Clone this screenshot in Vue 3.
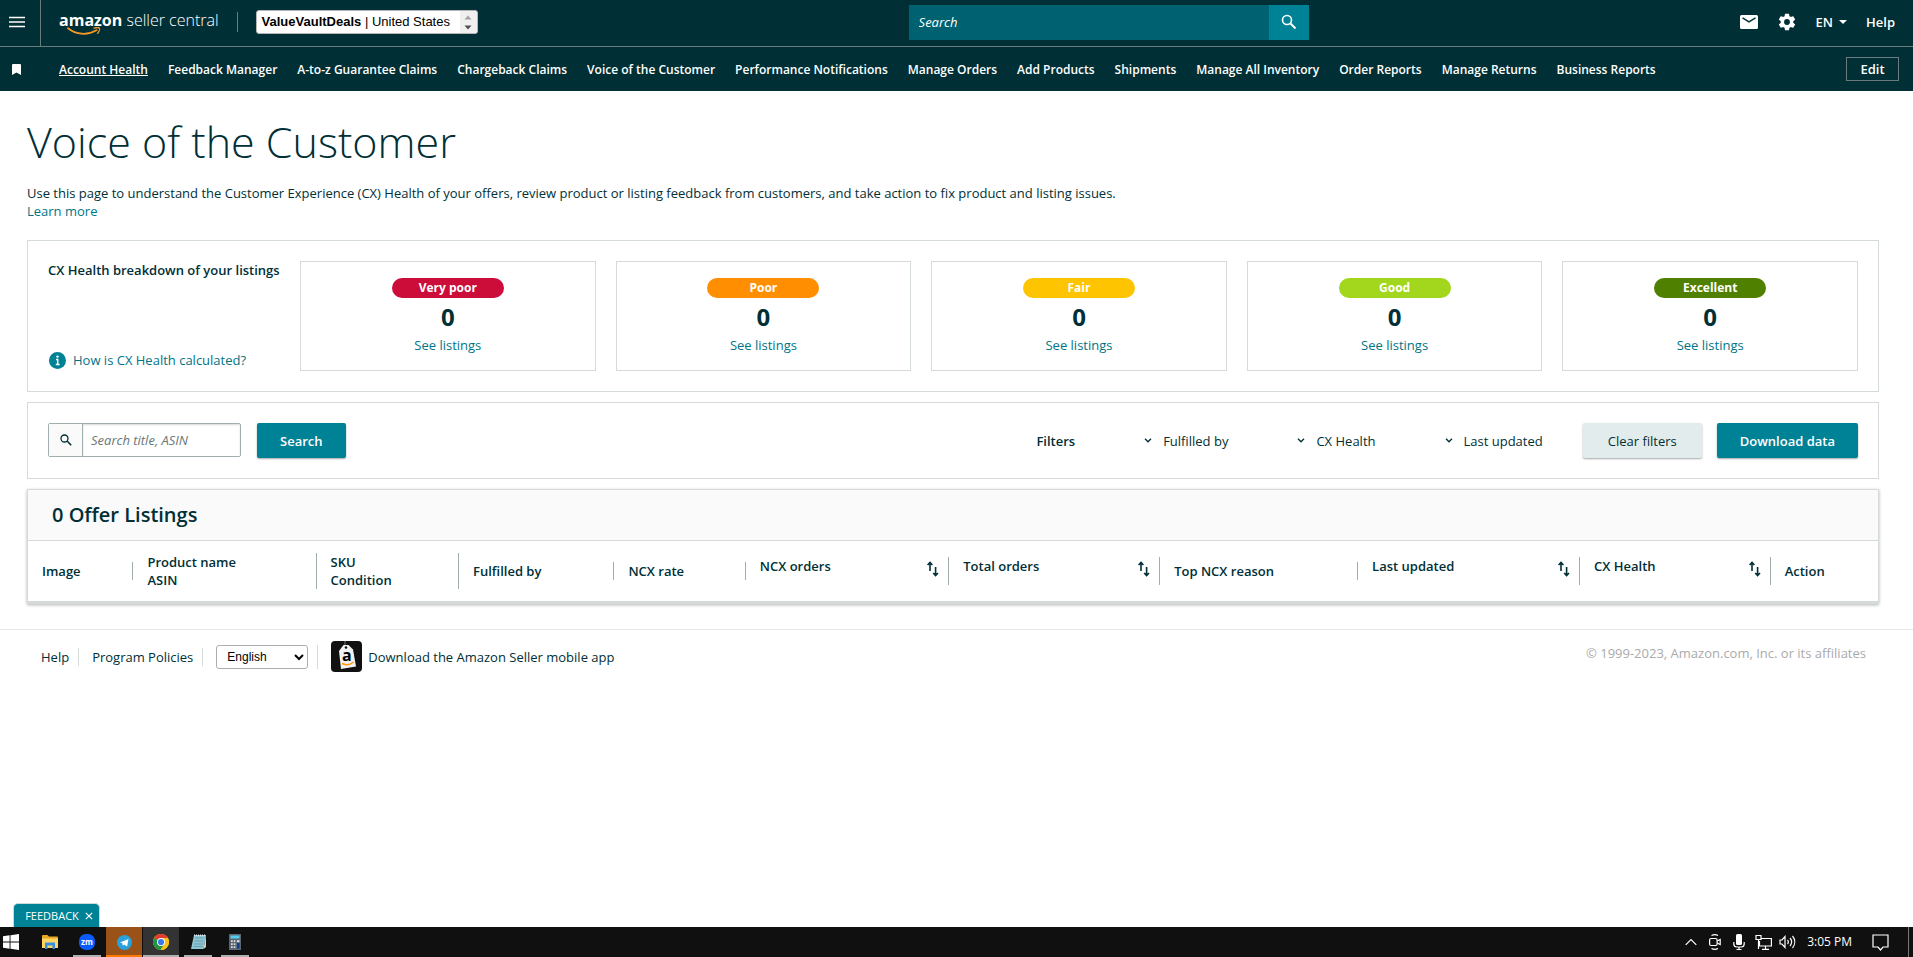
<template>
  <div class="page">
    <header class="topbar">
      <button class="menu-btn" aria-label="Menu">
        <svg width="16" height="12" viewBox="0 0 16 12"><path d="M0 1.500h16M0 6h16M0 10.500h16" stroke="#fff" stroke-width="1.600" /></svg>
      </button>
      <a class="logo" href="#">
        <b>amazon</b> seller central
        <svg class="smile" width="34" height="9" viewBox="0 0 34 9">
          <path d="M1 1.200C9 7.600 20 8.800 29.500 3.200" fill="none" stroke="#f59a23" stroke-width="1.800" stroke-linecap="round" />
          <path d="M27 1.200c2.500-.8 4.500-.8 5.300-.2.600.900-.1 3.600-1.600 5.400" fill="none" stroke="#f59a23" stroke-width="1.300" stroke-linecap="round" />
        </svg>
      </a>
      <span class="topbar-divider"></span>
      <button class="account">
        <span class="account-name"><b>ValueVaultDeals</b> | United States</span>
        <span class="account-arrows">
          <svg width="8" height="18" viewBox="0 0 8 18"><path d="M.5 6.500 4 2.500l3.500 4z" fill="#a3a3a3" /><path d="M.5 12.500 4 16.500l3.500-4z" fill="#505050" /></svg>
        </span>
      </button>
      <form class="top-search" @submit.prevent>
        <input v-model="topQuery" type="text" placeholder="Search" aria-label="Search" />
        <button aria-label="Go">
          <svg width="16" height="16" viewBox="0 0 16 16" fill="none" stroke="#fff"><circle cx="6" cy="6" r="4.500" stroke-width="1.600" /><path d="m9.500 9.500 5 5" stroke-width="2" /></svg>
        </button>
      </form>
      <div class="top-tools">
        <button aria-label="Messages">
          <svg width="18" height="14" viewBox="0 0 18 14"><rect width="18" height="14" rx="1.500" fill="#fff" /><path d="m2.500 2.800 6.500 4 6.500-4" fill="none" stroke="#002f36" stroke-width="1.500" /></svg>
        </button>
        <button aria-label="Settings">
          <svg width="20" height="20" viewBox="0 0 24 24" fill="#fff"><path d="M19.430 12.980c.04-.32.070-.64.070-.98s-.03-.66-.07-.98l2.110-1.650c.19-.15.240-.42.120-.64l-2-3.460c-.12-.22-.39-.3-.61-.22l-2.490 1c-.52-.4-1.080-.73-1.690-.98l-.38-2.650C14.460 2.180 14.250 2 14 2h-4c-.25 0-.46.180-.49.420l-.38 2.650c-.61.250-1.170.590-1.690.980l-2.490-1c-.23-.09-.49 0-.61.220l-2 3.460c-.13.220-.07.490.120.640l2.110 1.650c-.04.320-.07.650-.07.980s.03.660.070.980l-2.110 1.650c-.19.150-.24.420-.12.640l2 3.460c.12.220.390.300.610.220l2.490-1c.52.400 1.080.730 1.690.980l.38 2.650c.03.240.240.420.490.420h4c.25 0 .46-.18.490-.42l.38-2.650c.61-.25 1.170-.59 1.690-.98l2.490 1c.23.090.490 0 .610-.22l2-3.460c.12-.22.070-.49-.12-.64zM12 15.500A3.500 3.500 0 1 1 12 8.500a3.500 3.500 0 0 1 0 7z" /></svg>
        </button>
        <button class="lang">EN <svg width="8" height="4" viewBox="0 0 8 4"><path d="M0 0h8L4 4z" fill="#fff" /></svg></button>
        <a href="#">Help</a>
      </div>
    </header>

    <nav class="favorites">
      <span class="bookmark">
        <svg width="9" height="11" viewBox="0 0 9 11"><path d="M0 1a1 1 0 0 1 1-1h7a1 1 0 0 1 1 1v10L4.500 8.500 0 11z" fill="#fff" /></svg>
      </span>
      <div class="favorites-links">
        <a v-for="(item, i) in favorites" :key="item" href="#" :class="{ current: i === 0 }">{{ item }}</a>
      </div>
      <button class="edit-btn">Edit</button>
    </nav>

    <main class="content">
      <h1>Voice of the Customer</h1>
      <p class="intro">
        Use this page to understand the Customer Experience (CX) Health of your offers, review product or listing feedback from customers, and take action to fix product and listing issues.<br />
        <a href="#">Learn more</a>
      </p>

      <section class="panel breakdown">
        <div class="breakdown-side">
          <h2>CX Health breakdown of your listings</h2>
          <a class="how" href="#">
            <svg width="17" height="17" viewBox="0 0 17 17"><circle cx="8.500" cy="8.500" r="8.500" fill="#008296" /><path d="M7 7.500h1.700v4.700M6.800 12.500h3.800" stroke="#fff" stroke-width="1.500" fill="none" /><circle cx="8.500" cy="4.600" r="1.200" fill="#fff" /></svg>
            How is CX Health calculated?
          </a>
        </div>
        <div class="cards">
          <div v-for="card in cards" :key="card.label" class="card">
            <span class="pill" :class="card.tone">{{ card.label }}</span>
            <strong>{{ card.count }}</strong>
            <a href="#">See listings</a>
          </div>
        </div>
      </section>

      <section class="panel toolbar">
        <form class="search-form" @submit.prevent>
          <div class="search-box">
            <label for="listing-search" aria-label="Search title, ASIN">
              <svg width="12" height="12" viewBox="0 0 12 12" fill="none" stroke="#002f36"><circle cx="4.500" cy="4.500" r="3.500" stroke-width="1.300" /><path d="m7 7 4.200 4.200" stroke-width="1.600" /></svg>
            </label>
            <input id="listing-search" v-model="listingQuery" type="text" placeholder="Search title, ASIN" />
          </div>
          <button class="btn primary">Search</button>
        </form>
        <div class="filters">
          <span class="filters-title">Filters</span>
          <button v-for="filter in filters" :key="filter" class="filter">
            <svg width="8" height="5" viewBox="0 0 8 5"><path d="m1 .8 3 3 3-3" fill="none" stroke="#002f36" stroke-width="1.300" /></svg>
            {{ filter }}
          </button>
        </div>
        <button class="btn secondary">Clear filters</button>
        <button class="btn primary download">Download data</button>
      </section>

      <section class="listings">
        <h2>0 Offer Listings</h2>
        <table>
          <colgroup>
            <col v-for="col in columns" :key="col.lines[0]" :style="{ width: col.width + '%' }" />
          </colgroup>
          <thead>
            <tr>
              <th v-for="col in columns" :key="col.lines[0]">
                <div class="th-inner" :class="{ sortable: col.sortable }">
                  <span><template v-for="(line, i) in col.lines" :key="line"><br v-if="i" />{{ line }}</template></span>
                  <button v-if="col.sortable" :aria-label="'Sort by ' + col.lines[0]">
                    <svg width="12" height="16" viewBox="0 0 12 16" fill="none" stroke="#002f36" stroke-width="1.600"><path d="M3 10V1.500M.6 4 3 1.400 5.400 4M8.600 6v8.500M6.200 12l2.400 2.600L11 12" /></svg>
                  </button>
                </div>
              </th>
            </tr>
          </thead>
        </table>
      </section>
    </main>

    <footer class="footer">
      <a href="#">Help</a>
      <a href="#">Program Policies</a>
      <div class="footer-lang">
        <select v-model="language" aria-label="Language">
          <option>English</option>
        </select>
      </div>
      <a class="app-link" href="#">
        <svg width="31" height="31" viewBox="0 0 31 31">
          <rect width="31" height="31" rx="4" fill="#111" />
          <path d="M14 0v5" stroke="#777" />
          <path d="m8 10 4.500-6h5L22 8.500l3 17L10 28z" fill="#f2f2f2" />
          <circle cx="15" cy="6.500" r="1.300" fill="#111" />
          <text x="11" y="20" class="app-letter">a</text>
          <path d="M11 22.500c4 2 8 1.500 11.500-1.500" fill="none" stroke="#f90" stroke-width="1.400" />
        </svg>
        Download the Amazon Seller mobile app
      </a>
      <span class="copyright">© 1999-2023, Amazon.com, Inc. or its affiliates</span>
    </footer>

    <button class="feedback">
      FEEDBACK
      <svg width="8" height="8" viewBox="0 0 8 8"><path d="m.8.8 6.400 6.400M7.200.8.8 7.200" stroke="#fff" stroke-width="1.200" /></svg>
    </button>

    <div class="taskbar">
      <button class="task start" aria-label="Start">
        <svg width="16" height="16" viewBox="0 0 16 16" fill="#fff"><path d="M0 2.200 6.600 1.300v6.200H0zM7.500 1.200 16 0v7.500H7.500zM0 8.400h6.600v6.300L0 13.800zM7.500 8.400H16V16l-8.500-1.200z" /></svg>
      </button>
      <button class="task" aria-label="File Explorer">
        <svg width="16" height="14" viewBox="0 0 16 14"><path d="M0 1a1 1 0 0 1 1-1h4.500L7 1.500h8a1 1 0 0 1 1 1V13H0z" fill="#e8a722" /><path d="M0 3.500h16V13H0z" fill="#fdd663" /><path d="M3 14V7.500h10V14h-2.500v-3.500h-5V14z" fill="#3a8ee0" /></svg>
      </button>
      <button class="task open" aria-label="Zoom">
        <svg width="16" height="16" viewBox="0 0 16 16"><rect width="16" height="16" rx="7" fill="#0b5cff" /><text x="8" y="10.500" text-anchor="middle" class="zm">zm</text></svg>
      </button>
      <button class="task alert" aria-label="Telegram">
        <svg width="15" height="15" viewBox="0 0 15 15"><circle cx="7.500" cy="7.500" r="7.500" fill="#2aa1da" /><path d="m3 7.400 8.500-3.500-1.400 7.600-3-2-1.300 1.300-.4-2.500z" fill="#fff" /></svg>
      </button>
      <button class="task active" aria-label="Chrome">
        <svg width="16" height="16" viewBox="0 0 16 16"><circle cx="8" cy="8" r="8" fill="#fbc116" /><path d="M8 8 1.100 4A8 8 0 0 1 14.900 4z" fill="#e33b2e" /><path d="M8 8 1.100 4A8 8 0 0 0 7.500 16l4-6z" fill="#229342" /><path d="M8 4h6.900A8 8 0 0 1 7.500 16l4-6z" fill="#fbc116" /><circle cx="8" cy="8" r="4" fill="#fff" /><circle cx="8" cy="8" r="3.100" fill="#3b78e7" /></svg>
      </button>
      <button class="task open" aria-label="Notepad">
        <svg width="15" height="16" viewBox="0 0 15 16"><path d="M3 1h12l-2.500 14H0z" fill="#8fc6d3" /><path d="M12.500 15 15 1v12z" fill="#d8d8c8" /><path d="M4 4h9M3.500 7h9M3 10h9M2.500 12.500h9" stroke="#5d96a5" stroke-width=".8" /><path d="M3 1.200h12" stroke="#d9e8ec" stroke-width="1.600" stroke-dasharray="1 1" /></svg>
      </button>
      <button class="task open" aria-label="Calculator">
        <svg width="12" height="16" viewBox="0 0 12 16"><rect width="12" height="16" fill="#5c6670" /><rect x="1.500" y="1.500" width="9" height="3" fill="#55cbee" /><path d="M2 7.200h5.500M2 10.200h5.500M2 13.200h5.500" stroke="#d7dde2" stroke-width="1.800" stroke-dasharray="1.700 1" /><rect x="8" y="9" width="2.500" height="5.500" fill="#123f86" /><rect x="8" y="6.200" width="2.500" height="2" fill="#d7dde2" /></svg>
      </button>
      <div class="tray">
        <span class="tray-icon"><svg width="12" height="8" viewBox="0 0 12 8"><path d="m.7 6.800 5.300-5.300 5.300 5.300" /></svg></span>
        <span class="tray-icon"><svg width="12" height="16" viewBox="0 0 12 16"><rect x=".6" y="4.500" width="7.500" height="7" rx="1.500" /><path d="m8.200 7 3-1.500v5L8.200 9M2.500 1.500C4.500.4 7 .4 9 1.500M2.500 14.500c2 1.100 4.500 1.100 6.500 0" /></svg></span>
        <span class="tray-icon"><svg width="12" height="16" viewBox="0 0 12 16"><rect x="3" y="0" width="6" height="11" rx="1.500" fill="#fff" stroke="none" /><path d="M.8 8v2c0 2 1.500 3 3 3h4.400c1.500 0 3-1 3-3V8M6 13v2.500M3.500 15.500h5" /></svg></span>
        <span class="tray-icon"><svg width="17" height="16" viewBox="0 0 17 16"><path d="M6 4.500h10.400v7.500H4.500V7M10.500 12v3M7 15.400h7M1 1.500h5v4H1zM3.500 5.500V15" /></svg></span>
        <span class="tray-icon"><svg width="17" height="14" viewBox="0 0 17 14"><path d="M1 5h2l3-3.500v11L3 9H1zM8.500 5c1 1.200 1 2.800 0 4M11 3c2 2.400 2 5.600 0 8M13.500 1c3 3.600 3 8.400 0 12" /></svg></span>
        <span class="clock">3:05 PM</span>
        <span class="tray-icon"><svg width="17" height="17" viewBox="0 0 17 17"><path d="M1 1h15v12h-5l-2.500 3L6 13H1z" /></svg></span>
      </div>
    </div>
  </div>
</template>

<script setup>
import { ref } from 'vue'

const topQuery = ref('')
const listingQuery = ref('')
const language = ref('English')

const favorites = [
  'Account Health', 'Feedback Manager', 'A-to-z Guarantee Claims', 'Chargeback Claims',
  'Voice of the Customer', 'Performance Notifications', 'Manage Orders', 'Add Products',
  'Shipments', 'Manage All Inventory', 'Order Reports', 'Manage Returns', 'Business Reports'
]

const cards = [
  { label: 'Very poor', tone: 'very-poor', count: 0 },
  { label: 'Poor', tone: 'poor', count: 0 },
  { label: 'Fair', tone: 'fair', count: 0 },
  { label: 'Good', tone: 'good', count: 0 },
  { label: 'Excellent', tone: 'excellent', count: 0 }
]

const filters = ['Fulfilled by', 'CX Health', 'Last updated']

// widths are shares of the table
const columns = [
  { lines: ['Image'], width: 5.7 },
  { lines: ['Product name', 'ASIN'], width: 9.9 },
  { lines: ['SKU', 'Condition'], width: 7.7 },
  { lines: ['Fulfilled by'], width: 8.4 },
  { lines: ['NCX rate'], width: 7.1 },
  { lines: ['NCX orders'], width: 11, sortable: true },
  { lines: ['Total orders'], width: 11.4, sortable: true },
  { lines: ['Top NCX reason'], width: 10.7 },
  { lines: ['Last updated'], width: 12, sortable: true },
  { lines: ['CX Health'], width: 10.3, sortable: true },
  { lines: ['Action'], width: 5.8 }
]
</script>

<style>
body {
  margin: 0;
  background: #fff;
}
</style>

<style scoped>
.page {
  min-height: 100vh;
  color: #002f36;
  font-family: "Open Sans", "Noto Sans", sans-serif;
  font-size: 13px;
  line-height: 18px;
}

.page * {
  box-sizing: border-box;
}

a {
  color: #007587;
  text-decoration: none;
}

button,
input {
  font: inherit;
  color: inherit;
}

button {
  padding: 0;
  border: none;
  background: none;
  cursor: pointer;
}

svg {
  display: block;
  flex-shrink: 0;
}

/* top bar */
.topbar {
  display: flex;
  align-items: center;
  height: 47px;
  padding-bottom: 2px;
  background: #002f36;
  border-bottom: 1px solid #6b7b7d;
  color: #fff;
}

.menu-btn {
  display: flex;
  align-items: center;
  width: 41px;
  height: 46px;
  margin-bottom: -2px;
  padding: 0 0 2px 9px;
  border-right: 1px solid #6b7b7d;
}

.logo {
  position: relative;
  margin-left: 18px;
  padding-bottom: 4px;
  font-size: 16px;
  font-weight: 300;
  color: #fff;
  white-space: nowrap;
}

.logo b {
  font-weight: 700;
}

.smile {
  position: absolute;
  left: 8px;
  top: 16px;
}

.topbar-divider {
  width: 1px;
  height: 20px;
  margin: 0 18px;
  background: #6b7b7d;
}

.account {
  display: flex;
  align-items: center;
  justify-content: space-between;
  width: 222px;
  height: 24px;
  border: 1px solid #b5b5b5;
  border-radius: 3px;
  background: #fff;
  color: #000;
  font-family: "Liberation Sans", Arial, sans-serif;
  overflow: hidden;
}

.account-name {
  padding-left: 5px;
}

.account-arrows {
  display: flex;
  align-items: center;
  justify-content: center;
  width: 17px;
  height: 100%;
  background: #f0f0f0;
}

.top-search {
  display: flex;
  width: 400px;
  height: 35px;
  margin-left: auto;
}

.top-search input {
  flex: 1;
  min-width: 0;
  padding: 0 10px;
  border: none;
  background: #006170;
}

.top-search input::placeholder {
  color: #fff;
  font-style: italic;
  opacity: 1;
}

.top-search button {
  display: flex;
  align-items: center;
  justify-content: center;
  width: 40px;
  background: #008296;
}

.top-tools {
  display: flex;
  align-items: center;
  gap: 19px;
  margin-left: auto;
  padding-right: 18px;
  font-weight: 600;
}

.top-tools a {
  color: #fff;
}

.lang {
  display: flex;
  align-items: center;
  gap: 6px;
}

/* favorites bar */
.favorites {
  display: flex;
  align-items: center;
  height: 44px;
  padding-right: 14px;
  background: #002f36;
  color: #fff;
  font-weight: 600;
  white-space: nowrap;
}

.favorites-links {
  display: flex;
  gap: 20px;
  padding-top: 2px;
  font-size: 12px;
}

.favorites a {
  color: #fff;
}

.favorites .current {
  text-decoration: underline;
}

.bookmark {
  width: 59px;
  padding-left: 12px;
}

.edit-btn {
  width: 53px;
  height: 24px;
  margin-left: auto;
  border: 1px solid #6b7b7d;
}

/* content */
.content {
  padding: 23px 34px 25px 27px;
}

h1 {
  margin: 0;
  font-size: 43px;
  font-weight: 300;
  line-height: 56px;
}

h2 {
  margin: 0;
  font-size: 13px;
  font-weight: 600;
  line-height: 18px;
}

.intro {
  margin: 14px 0 20px;
}

.panel {
  margin-bottom: 10px;
  border: 1px solid #d5dbdb;
}

.breakdown {
  display: flex;
  padding: 20px;
}

.breakdown-side {
  display: flex;
  flex-direction: column;
  justify-content: space-between;
  flex-shrink: 0;
  width: 252px;
  padding-bottom: 2px;
}

.how {
  display: flex;
  align-items: center;
  gap: 7px;
  padding-left: 1px;
}

.cards {
  flex: 1;
  display: grid;
  grid-template-columns: repeat(5, 1fr);
  gap: 20px;
}

.card {
  display: flex;
  flex-direction: column;
  align-items: center;
  padding: 16px 0;
  border: 1px solid #d5dbdb;
}

.card strong {
  margin: 4px 0;
  font-size: 24px;
  line-height: 30px;
}

.pill {
  width: 112px;
  border-radius: 10px;
  color: #fff;
  font-size: 12px;
  font-weight: 700;
  line-height: 20px;
  text-align: center;
}

.very-poor { background: #cc0c39; }
.poor { background: #ff8f00; }
.fair { background: #ffc400; }
.good { background: #a2d71e; }
.excellent { background: #508000; }

/* search and filters */
.toolbar {
  display: flex;
  align-items: center;
  padding: 20px;
}

.search-form {
  display: flex;
  gap: 16px;
  margin-right: auto;
}

.search-box {
  display: flex;
  width: 193px;
  height: 34px;
  border: 1px solid #a0aeb0;
  border-radius: 2px;
}

.search-box label {
  display: flex;
  align-items: center;
  justify-content: center;
  width: 34px;
  background: #fafafa;
  border-right: 1px solid #a0aeb0;
}

.search-box input {
  flex: 1;
  min-width: 0;
  padding: 0 8px;
  border: none;
  box-shadow: inset 0 1px 2px rgba(0, 0, 0, 0.15);
}

.search-box input::placeholder {
  color: #687778;
  font-style: italic;
  opacity: 1;
}

.btn {
  height: 35px;
  padding: 0 25px;
  border-radius: 2px;
  box-shadow: 0 1px 2px rgba(0, 0, 0, 0.35);
  white-space: nowrap;
}

.primary {
  padding: 0 23px;
  background: #008296;
  color: #fff;
  font-weight: 600;
}

.secondary {
  background: #e3eced;
}

.download {
  margin-left: 15px;
}

.filters {
  display: flex;
  align-items: center;
  gap: 69px;
  margin-right: 40px;
}

.filters-title {
  font-weight: 600;
}

.filter {
  display: flex;
  align-items: center;
  gap: 11px;
}

/* listings table */
.listings {
  border: 1px solid #d5dbdb;
  border-bottom-width: 3px;
  box-shadow: 0 1px 3px rgba(0, 0, 0, 0.3);
}

.listings h2 {
  padding: 12px 24px;
  background: #fafafa;
  border-bottom: 1px solid #d5dbdb;
  font-size: 20px;
  line-height: 26px;
}

table {
  width: 100%;
  table-layout: fixed;
  border-collapse: collapse;
}

th {
  height: 60px;
  padding: 0;
  text-align: left;
  font-weight: 600;
}

.th-inner {
  display: flex;
  justify-content: space-between;
  padding-left: 14px;
  border-right: 1px solid #a0aeb0;
  white-space: nowrap;
}

th:last-child .th-inner {
  border-right: none;
}

.sortable {
  height: 28px;
  padding-right: 9px;
}

.sortable button {
  align-self: flex-start;
  padding-top: 4px;
}

/* footer */
.footer {
  display: flex;
  align-items: center;
  padding: 11px 47px 0 41px;
  border-top: 1px solid #e7e7e7;
}

.footer a {
  color: #002f36;
}

.footer > a:not(.app-link) {
  margin-right: 13px;
  padding-right: 9px;
  border-right: 1px solid #d5dbdb;
}

.footer-lang {
  margin-right: 13px;
  padding-right: 9px;
  border-right: 1px solid #d5dbdb;
}

.footer select {
  display: block;
  width: 92px;
  height: 24px;
  padding-left: 6px;
  border: 1px solid #adadad;
  border-radius: 3px;
  background: #fff;
  color: #000;
  font-family: "Liberation Sans", Arial, sans-serif;
  font-size: 12px;
}

.footer .app-link {
  display: flex;
  align-items: center;
  gap: 6px;
}

.app-letter {
  font: 700 16px "Open Sans", sans-serif;
}

.copyright {
  align-self: flex-start;
  margin-left: auto;
  color: #aaa;
  line-height: 24px;
}

/* feedback tab and taskbar stay at the window's bottom edge */
.feedback {
  position: fixed;
  left: 13px;
  bottom: 30px;
  display: flex;
  align-items: center;
  justify-content: center;
  gap: 6px;
  width: 87px;
  height: 24px;
  padding-left: 5px;
  border: 1px solid #cdd8da;
  border-bottom: none;
  border-radius: 5px 5px 0 0;
  background: #008296;
  color: #fff;
  font-size: 11px;
  font-weight: 500;
}

.taskbar {
  position: fixed;
  left: 0;
  right: 0;
  bottom: 0;
  display: flex;
  gap: 1px;
  height: 30px;
  background: #101010;
}

.task {
  position: relative;
  display: flex;
  align-items: center;
  justify-content: center;
  width: 36px;
}

.start {
  width: 31px;
  padding-right: 9px;
}

.open::after,
.alert::after,
.active::after {
  content: "";
  position: absolute;
  left: 4px;
  right: 4px;
  bottom: 0;
  height: 2px;
  background: #b0b0b0;
}

.alert {
  background: #9a5219;
}

.alert::after {
  left: 0;
  right: 0;
  background: #ff7a00;
}

.active {
  background: #333;
}

.active::after {
  left: 0;
  right: 0;
}

.zm {
  fill: #fff;
  font: 700 8px "Open Sans", sans-serif;
}

.tray {
  display: flex;
  align-items: center;
  margin: 0 4px 0 auto;
  padding-right: 16px;
  border-right: 1px solid #777;
  color: #fff;
  font-size: 12px;
}

.tray-icon {
  display: flex;
  justify-content: center;
  width: 24px;
}

.tray svg {
  fill: none;
  stroke: #fff;
  stroke-width: 1.2;
}

.clock {
  padding: 0 16px 0 8px;
}
</style>
